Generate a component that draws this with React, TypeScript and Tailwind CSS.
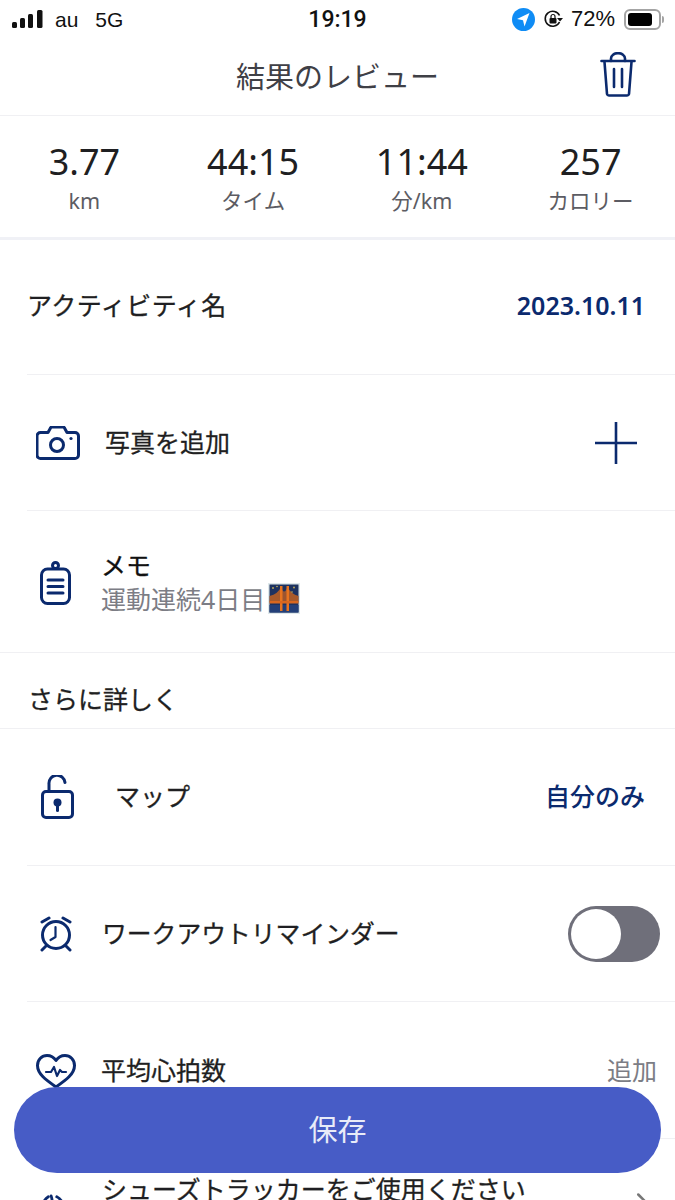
import { ChevronRight } from "lucide-react";

const navy = "#0b2a6e";

function Stat({ value, label }: { value: string; label: string }) {
  return (
    <div className="flex w-[169px] flex-col items-center">
      <span className="text-[36px] leading-[44px] text-[#1f1f22]">{value}</span>
      <span className="mt-[3px] text-[21.5px] leading-[28px] text-[#5c5c63]">{label}</span>
    </div>
  );
}

function Row({ className, children }: { className: string; children: React.ReactNode }) {
  return <div className={`ml-[27px] flex items-center border-b border-[#f0f0f3] ${className}`}>{children}</div>;
}

function BridgeEmoji() {
  return (
    <svg width="32" height="31" viewBox="0 0 32 31" className="ml-[3px]">
      <rect width="32" height="31" fill="#dfe8ea" />
      <rect x="1.500" y="1.500" width="29" height="28" fill="#1d3260" />
      <rect x="1.500" y="22" width="29" height="7.500" fill="#233f78" />
      <path d="M1.500 13 Q10 11 13 4 L13 19 L1.500 19 Z" fill="#a85a2a" />
      <path d="M30.500 13 Q23 11 19.500 4 L19.500 19 L30.500 19 Z" fill="#a85a2a" />
      <path d="M13 4 Q16 13 19.500 4 L19.500 19 L13 19 Z" fill="#9c5530" />
      <rect x="12" y="3" width="2.500" height="25" fill="#e8741f" />
      <rect x="18.500" y="3" width="2.500" height="25" fill="#e8741f" />
      <rect x="1.500" y="18" width="29" height="2.500" fill="#d8671f" />
      <circle cx="5" cy="5" r="0.900" fill="#c9b257" />
      <circle cx="26" cy="4.500" r="0.900" fill="#c9b257" />
      <circle cx="9" cy="3.500" r="0.800" fill="#c9b257" />
      <circle cx="24" cy="9" r="0.800" fill="#c9b257" />
    </svg>
  );
}

export default function App() {
  return (
    <div
      className="relative h-[1200px] w-[675px] overflow-hidden bg-white"
      style={{ fontFamily: '"Noto Sans", "Noto Sans CJK JP", sans-serif' }}
    >
      {/* status bar */}
      <div className="flex h-[38px] items-center justify-between pl-[11px] pr-[11px] text-[#111]" style={{ fontFamily: '"Liberation Sans", "Noto Sans CJK JP", sans-serif' }}>
        <div className="flex w-[200px] items-center">
          <svg width="32" height="20" viewBox="0 0 32 20" fill="#111">
            <rect x="1" y="13" width="5" height="6" rx="1.500" />
            <rect x="9" y="9" width="5" height="10" rx="1.500" />
            <rect x="17" y="5" width="5" height="14" rx="1.500" />
            <rect x="26" y="1" width="5.500" height="18" rx="1.500" />
          </svg>
          <span className="ml-[12px] text-[21px] leading-none">au</span>
          <span className="ml-[17px] text-[21px] leading-none">5G</span>
        </div>
        <span className="text-[23px] leading-none" style={{ fontFamily: '"Roboto", sans-serif', fontWeight: 500 }}>19:19</span>
        <div className="flex w-[200px] items-center justify-end">
          <svg width="23" height="23" viewBox="0 0 23 23">
            <circle cx="11.500" cy="11.500" r="11.500" fill="#0f8cf5" />
            <path d="M17.500 5 L5 11 L11 12.300 L12.500 18.500 Z" fill="#fff" />
          </svg>
          <svg width="21" height="20" viewBox="0 0 21 20" className="ml-[8px]" fill="none">
            <path d="M16.500 13 A7.500 7.500 0 1 1 16.500 6.500" stroke="#111" strokeWidth="1.600" />
            <path d="M14 9 L20 9 L17 12.500 Z" fill="#111" />
            <rect x="6.500" y="9" width="7" height="5.500" rx="1" fill="#111" />
            <path d="M8 9 V7.500 a2 2 0 0 1 4 0 V9" stroke="#111" strokeWidth="1.200" />
          </svg>
          <span className="ml-[7px] text-[22px] leading-none">72%</span>
          <div className="ml-[9px] flex h-[21px] w-[37px] items-center rounded-[6px] border-2 border-[#a4a4a4] p-[2px]">
            <div className="h-full w-[24px] rounded-[3px] bg-black" />
          </div>
          <div className="ml-[1px] h-[7px] w-[2px] rounded-r bg-[#a4a4a4]" />
        </div>
      </div>

      {/* header */}
      <div className="relative flex h-[78px] items-center justify-center border-b border-[#f0f0f3]">
        <span className="text-[29px] text-[#3f4046]">結果のレビュー</span>
        <svg width="36" height="46" viewBox="0 0 36 46" fill="none" stroke={navy} strokeWidth="2.600" strokeLinecap="round" strokeLinejoin="round" className="absolute left-[600px] top-[14px]">
          <path d="M1.500 9 H34.500" />
          <path d="M11 9 V6.500 a6.500 5 0 0 1 14 0 V9" />
          <path d="M4.500 10 L7 42 a2 2 0 0 0 2 1.500 H27 a2 2 0 0 0 2 -1.500 L31.500 10" />
          <path d="M14 17 V35 M22 17 V35" />
        </svg>
      </div>

      {/* stats */}
      <div className="flex h-[124px] items-start border-b-[3px] border-[#f0f1f6] pt-[24px]">
        <Stat value="3.77" label="km" />
        <Stat value="44:15" label="タイム" />
        <Stat value="11:44" label="分/km" />
        <Stat value="257" label="カロリー" />
      </div>

      <Row className="h-[135px] justify-between pr-[30px] pb-[3px]">
        <span className="text-[25px] tracking-[0.5px] text-[#1f1f22] [-webkit-text-stroke:0.3px_#1f1f22]">アクティビティ名</span>
        <span className="text-[25px] font-semibold text-[#0b2a6e]">2023.10.11</span>
      </Row>

      <Row className="h-[136px] justify-between pr-[37px]">
        <div className="flex items-center">
          <svg width="44" height="34" viewBox="0 0 44 34" fill="none" stroke={navy} strokeWidth="3" strokeLinejoin="round" className="ml-[9px]">
            <path d="M4.500 6.500 H12 L14.500 2 a1.500 1.500 0 0 1 1.500 -1 H27 a1.500 1.500 0 0 1 1.500 1 L31 6.500 H39 a3.500 3.500 0 0 1 3.500 3.500 V29 a3.500 3.500 0 0 1 -3.500 3.500 H4.500 a3.500 3.500 0 0 1 -3.500 -3.500 V10 a3.500 3.500 0 0 1 3.500 -3.500 Z" />
            <circle cx="21" cy="19" r="6.500" />
            <circle cx="35" cy="12.500" r="1.600" fill={navy} stroke="none" />
          </svg>
          <span className="ml-[25px] text-[25px] text-[#1f1f22] [-webkit-text-stroke:0.3px_#1f1f22]">写真を追加</span>
        </div>
        <svg width="44" height="44" viewBox="0 0 44 44" stroke={navy} strokeWidth="2.600">
          <path d="M22 1 V43 M1 22 H43" />
        </svg>
      </Row>

      <div className="flex h-[142px] items-center border-b border-[#f0f0f3] pl-[40px]">
        <svg width="31" height="44" viewBox="0 0 31 44" fill="none" stroke={navy} strokeWidth="3" strokeLinecap="round" className="mt-[2px]">
          <rect x="1.500" y="8" width="28" height="34.500" rx="6" />
          <circle cx="15.500" cy="4.500" r="3" />
          <path d="M8 19 H23 M8 25.500 H23 M8 32 H23" />
        </svg>
        <div className="ml-[30px] flex flex-col">
          <span className="text-[25px] leading-[34px] text-[#111] [-webkit-text-stroke:0.3px_#111]">メモ</span>
          <div className="flex items-center">
            <span className="text-[25px] leading-[34px] text-[#7c7d85]">運動連続4日目</span>
            <BridgeEmoji />
          </div>
        </div>
      </div>

      <div className="flex h-[76px] items-center border-b border-[#f0f0f3] pl-[28px] pt-[19px]">
        <span className="text-[25px] text-[#1f1f22] [-webkit-text-stroke:0.3px_#1f1f22]">さらに詳しく</span>
      </div>

      <Row className="h-[137px] justify-between pr-[30px]">
        <div className="flex items-center">
          <svg width="34" height="44" viewBox="0 0 34 44" fill="none" stroke={navy} strokeWidth="3" strokeLinejoin="round" strokeLinecap="round" className="ml-[14px]">
            <rect x="1.500" y="16.500" width="30" height="26" rx="3.500" />
            <path d="M8 16 V9 a8 8 0 0 1 16 -1.500" />
            <circle cx="16.500" cy="27.500" r="4" fill={navy} stroke="none" />
            <path d="M16.500 28 V35.500" />
          </svg>
          <span className="ml-[40px] text-[25px] text-[#1f1f22] [-webkit-text-stroke:0.3px_#1f1f22]">マップ</span>
        </div>
        <span className="text-[25px] font-medium text-[#0b2a6e]">自分のみ</span>
      </Row>

      <Row className="h-[136px] justify-between pr-[15px]">
        <div className="flex items-center">
          <svg width="32" height="36" viewBox="0 0 32 36" fill="none" stroke={navy} strokeWidth="3" strokeLinecap="round" strokeLinejoin="round" className="ml-[13px]">
            <circle cx="16" cy="19" r="13.500" />
            <path d="M15.500 11 V21 L10.500 24" strokeWidth="2.200" />
            <path d="M2 6 L9 2 M30 6 L23 2 M6 30 L2 34 M26 30 L30 34" />
          </svg>
          <span className="ml-[30px] text-[24.800px] text-[#1f1f22] [-webkit-text-stroke:0.3px_#1f1f22]">ワークアウトリマインダー</span>
        </div>
        <div className="flex h-[56px] w-[92px] items-center rounded-full bg-[#6f6f7a] p-[3px]">
          <div className="h-[50px] w-[50px] rounded-full bg-white" />
        </div>
      </Row>

      <Row className="h-[137px] items-start justify-between pr-[18px] pt-[50px]">
        <div className="flex items-center">
          <svg width="40" height="36" viewBox="0 0 40 36" fill="none" stroke={navy} strokeWidth="3" strokeLinecap="round" strokeLinejoin="round" className="ml-[9px] mt-[2px]">
            <path d="M20 33 C10 26 1.500 20 1.500 11.500 C1.500 5.500 6 1.500 11 1.500 C15 1.500 18 3.500 20 6.500 C22 3.500 25 1.500 29 1.500 C34 1.500 38.500 5.500 38.500 11.500 C38.500 20 30 26 20 33 Z" />
            <path d="M10 18 H15 L18 13 L21 22 L24 16 L26 18 H30" strokeWidth="2.200" />
          </svg>
          <span className="ml-[25px] text-[25px] text-[#1f1f22] [-webkit-text-stroke:0.3px_#1f1f22]">平均心拍数</span>
        </div>
        <span className="text-[25px] text-[#7c7d85]">追加</span>
      </Row>

      <div className="ml-[27px] flex items-start justify-between pr-[18px] pt-[33px]">
        <div className="flex items-start">
          <svg width="30" height="32" viewBox="0 0 32 32" fill="none" stroke={navy} strokeWidth="3" strokeLinecap="round" className="ml-[11px] mt-[21px]">
            <path d="M5 24 C2 14 6 6 11 3 M14 2 C16 8 16 14 13 24 M20 3 C26 6 30 14 27 24" />
          </svg>
          <span className="ml-[34px] text-[25px] leading-[34px] text-[#1f1f22] [-webkit-text-stroke:0.3px_#1f1f22]">シューズトラッカーをご使用ください</span>
        </div>
        <ChevronRight size={30} color="#777" strokeWidth={2} className="mt-[15px]" />
      </div>

      {/* save button */}
      <button className="absolute left-[14px] top-[1087px] flex h-[86px] w-[647px] items-center justify-center rounded-full bg-[#475cc6] text-[29px] text-[#e8ebf8]">
        保存
      </button>
    </div>
  );
}
